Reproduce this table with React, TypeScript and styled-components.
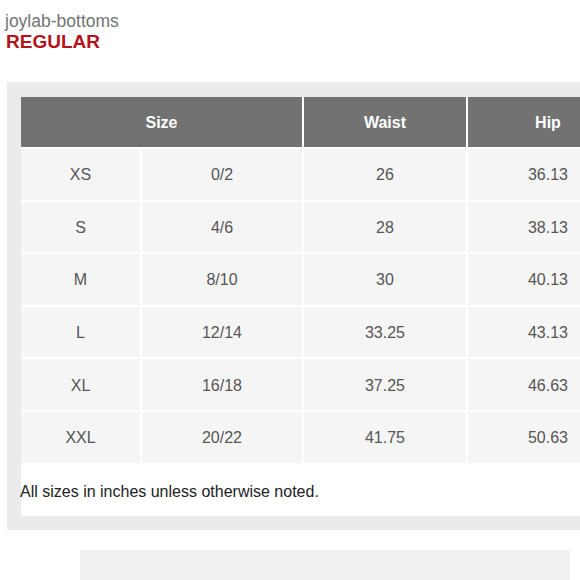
import { Fragment } from "react";
import styled, { createGlobalStyle } from "styled-components";

const GlobalStyle = createGlobalStyle`
  html, body {
    margin: 0;
    padding: 0;
    background: #fff;
    overflow: hidden;
  }
  body {
    font-family: "Liberation Sans", Arial, sans-serif;
  }
`;

const sizes = [
  { label: "XS", num: "0/2", waist: "26", hip: "36.13" },
  { label: "S", num: "4/6", waist: "28", hip: "38.13" },
  { label: "M", num: "8/10", waist: "30", hip: "40.13" },
  { label: "L", num: "12/14", waist: "33.25", hip: "43.13" },
  { label: "XL", num: "16/18", waist: "37.25", hip: "46.63" },
  { label: "XXL", num: "20/22", waist: "41.75", hip: "50.63" },
];

export default function App() {
  return (
    <Page>
      <GlobalStyle />
      <Heading>
        <Brand>joylab-bottoms</Brand>
        <Fit>REGULAR</Fit>
      </Heading>
      <Panel>
        <TableBox>
          <Grid>
            <HeadCell $span={2}>Size</HeadCell>
            <HeadCell>Waist</HeadCell>
            <HeadCell>Hip</HeadCell>
            {sizes.map((s) => (
              <Fragment key={s.label}>
                <Cell>{s.label}</Cell>
                <Cell>{s.num}</Cell>
                <Cell>{s.waist}</Cell>
                <Cell>{s.hip}</Cell>
              </Fragment>
            ))}
          </Grid>
          <Note>All sizes in inches unless otherwise noted.</Note>
        </TableBox>
      </Panel>
      <BottomBox />
    </Page>
  );
}

const Page = styled.div`
  width: 580px;
  height: 580px;
  padding-top: 11px;
  box-sizing: border-box;
  overflow: hidden;
`;

const Heading = styled.div`
  padding-left: 5px;
`;

const Brand = styled.div`
  font-size: 17.5px;
  line-height: 20px;
  color: #737373;
`;

const Fit = styled.div`
  font-size: 19px;
  line-height: 22px;
  font-weight: bold;
  color: #b3141c;
  margin-left: 1px;
`;

const Panel = styled.div`
  margin: 29px 0 0 7px;
  width: 660px;
  background: #ebebeb;
  padding: 15px 0 14px 14px;
`;

const TableBox = styled.div`
  background: #fff;
  width: 621px;
`;

const Grid = styled.div`
  display: grid;
  grid-template-columns: 119px 160px 162px 160px;
  grid-template-rows: 50px repeat(6, 50.6px);
  gap: 2px;
  background: #fff;
`;

const HeadCell = styled.div<{ $span?: number }>`
  grid-column: span ${(p) => p.$span ?? 1};
  background: #727272;
  color: #fff;
  font-weight: bold;
  font-size: 16px;
  display: flex;
  align-items: center;
  justify-content: center;
  padding-top: 2px;
  box-sizing: border-box;
`;

const Cell = styled.div`
  background: #f5f5f5;
  color: #555;
  font-size: 16px;
  display: flex;
  align-items: center;
  justify-content: center;
  padding-top: 2px;
  box-sizing: border-box;
`;

const Note = styled.div`
  height: 53.4px;
  display: flex;
  align-items: center;
  padding-top: 5px;
  box-sizing: border-box;
  font-size: 16px;
  color: #222;
  margin-left: -1px;
`;

const BottomBox = styled.div`
  margin: 20px 0 0 80px;
  width: 490px;
  height: 40px;
  background: #f0f0f0;
`;
